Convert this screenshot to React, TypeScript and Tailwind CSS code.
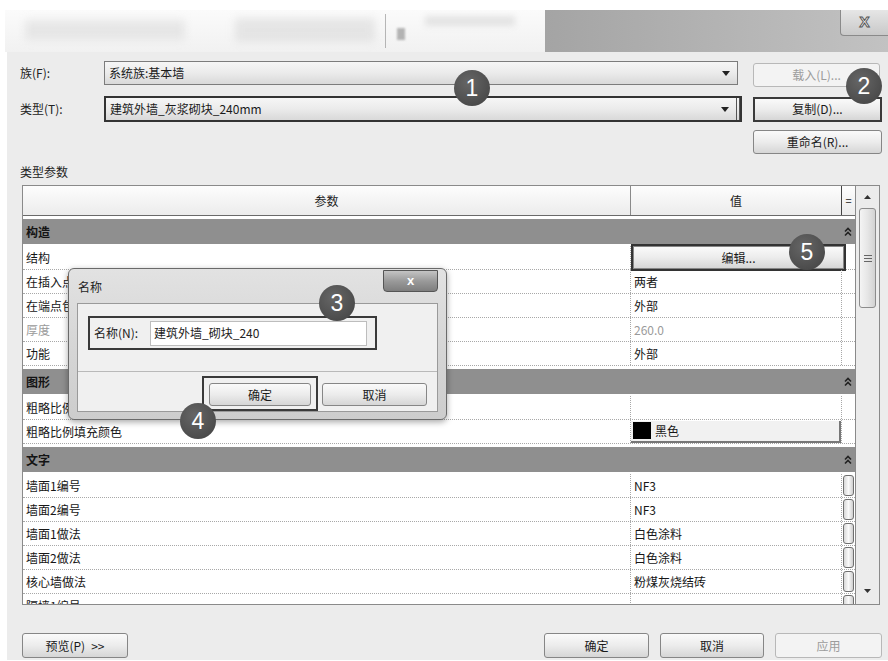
import React from 'react';

type Row = {
  name: string;
  value?: string;
  kind?: 'edit' | 'swatch' | 'dim';
  more?: boolean;
};

type Group = { title: string; rows: Row[] };

const groups: Group[] = [
  {
    title: '构造',
    rows: [
      { name: '结构', kind: 'edit' },
      { name: '在插入点包络', value: '两者' },
      { name: '在端点包络', value: '外部' },
      { name: '厚度', value: '260.0', kind: 'dim' },
      { name: '功能', value: '外部' },
    ],
  },
  {
    title: '图形',
    rows: [
      { name: '粗略比例填充样式' },
      { name: '粗略比例填充颜色', value: '黑色', kind: 'swatch' },
    ],
  },
  {
    title: '文字',
    rows: [
      { name: '墙面1编号', value: 'NF3', more: true },
      { name: '墙面2编号', value: 'NF3', more: true },
      { name: '墙面1做法', value: '白色涂料', more: true },
      { name: '墙面2做法', value: '白色涂料', more: true },
      { name: '核心墙做法', value: '粉煤灰烧结砖', more: true },
      { name: '隔墙1编号', value: '', more: true },
    ],
  },
];

const Button: React.FC<{ children: React.ReactNode; className?: string; disabled?: boolean }> = ({
  children,
  className = '',
  disabled,
}) => (
  <div
    className={`flex items-center justify-center rounded-[3px] border text-[12px] ${
      disabled
        ? 'border-[#b8b8b8] bg-[#f3f3f3] text-[#9c9c9c]'
        : 'border-[#868686] bg-gradient-to-b from-[#fafafa] via-[#ececec] to-[#d6d6d6] text-[#1a1a1a]'
    } ${className}`}
  >
    {children}
  </div>
);

const Caret = () => (
  <svg width="8" height="5" viewBox="0 0 8 5" className="shrink-0">
    <path d="M0 0h8L4 5z" fill="#222" />
  </svg>
);

const Collapse = () => (
  <svg width="8" height="10" viewBox="0 0 8 10">
    <path d="M1 4.5L4 1.5L7 4.5M1 8.5L4 5.5L7 8.5" fill="none" stroke="#222" strokeWidth="1.6" />
  </svg>
);

const Badge: React.FC<{ n: number; className: string }> = ({ n, className }) => (
  <div
    className={`absolute w-[36px] h-[36px] rounded-full bg-[radial-gradient(circle_at_40%_35%,#666,#414141)] text-white text-[23px] flex items-center justify-center font-['Liberation_Sans',sans-serif] ${className}`}
  >
    {n}
  </div>
);

const Select: React.FC<{ text: string; className?: string }> = ({ text, className = '' }) => (
  <div
    className={`flex items-center h-full pl-[4px] pr-[7px] bg-gradient-to-b from-[#f6f6f6] via-[#ebebeb] to-[#d9d9d9] text-[12px] text-[#1a1a1a] ${className}`}
  >
    <span className="flex-1">{text}</span>
    <Caret />
  </div>
);

function DataRow({ row }: { row: Row }) {
  const dim = row.kind === 'dim';
  return (
    <div className="flex h-[24px] shrink-0 border-b border-dotted border-[#a8a8a8] text-[12px]">
      <div
        className={`w-[608px] flex items-center px-[3px] border-r border-dotted border-[#a8a8a8] ${
          dim ? 'text-[#9a9a9a]' : 'text-[#161616]'
        }`}
      >
        {row.name}
      </div>
      {row.kind === 'edit' ? (
        <div className="w-[215px] border-2 border-[#333] -mt-[2px] h-[27px]">
          <Button className="h-full rounded-none">编辑...</Button>
        </div>
      ) : (
        <>
          <div
            className={`w-[211px] flex items-center border-r border-dotted border-[#a8a8a8] ${
              dim ? 'text-[#9a9a9a]' : 'text-[#161616]'
            }`}
          >
            {row.kind === 'swatch' ? (
              <div className="w-full h-[22px] flex items-center gap-[4px] pl-[2px] bg-[#f1f1f1] border-r-2 border-b-2 border-[#777]">
                <span className="w-[18px] h-[17px] bg-black" />
                <span>{row.value}</span>
              </div>
            ) : (
              <span className="px-[3px]">{row.value}</span>
            )}
          </div>
          <div className="w-[13px] flex items-center justify-center">
            {row.more && (
              <span className="w-[11px] h-[21px] rounded-[3px] border border-[#6f6f6f] bg-gradient-to-r from-[#d8d8d8] via-[#fafafa] to-[#cfcfcf]" />
            )}
          </div>
        </>
      )}
    </div>
  );
}

function GroupHeader({ title }: { title: string }) {
  return (
    <div className="mt-[3px] mb-[2px] flex h-[25px] shrink-0 items-center justify-between bg-[#8f8f8f] pl-[3px] pr-[3px] text-[12px] font-bold text-[#141414]">
      <span>{title}</span>
      <Collapse />
    </div>
  );
}

export default function App() {
  return (
    <div className="relative w-[888px] h-[661px] overflow-hidden bg-white font-['Noto_Sans_CJK_SC','Noto_Sans',sans-serif]">
      <div className="ml-[5px] mt-[10px] flex h-[650px] flex-col">
        {/* window caption */}
        <div className="flex h-[42px] shrink-0">
          <div className="relative w-[540px] overflow-hidden bg-gradient-to-b from-[#fbfbfb] to-[#f1f1f1]">
            <div className="absolute left-[20px] top-[10px] h-[20px] w-[160px] bg-[#dcdcdc] opacity-60 blur-[4px]" />
            <div className="absolute left-[230px] top-[8px] h-[24px] w-[140px] bg-[#d4d4d4] opacity-50 blur-[4px]" />
            <div className="absolute left-[380px] top-[4px] h-[34px] w-[1px] bg-[#9a9a9a] opacity-70" />
            <div className="absolute left-[392px] top-[18px] h-[12px] w-[8px] bg-[#888] opacity-60 blur-[1px]" />
            <div className="absolute left-[420px] top-[6px] h-[10px] w-[90px] bg-[#cfcfcf] opacity-50 blur-[3px]" />
          </div>
          <div className="flex flex-1 justify-end bg-gradient-to-r from-[#a4a4a4] via-[#b3b3b3] to-[#c2c2c2]">
            <div className="flex h-[26px] w-[48px] items-center justify-center rounded-bl-[4px] border-b border-l border-[#8a8a8a] bg-gradient-to-b from-[#e6e6e6] to-[#c9c9c9] text-[15px] font-bold text-white font-['Liberation_Sans',sans-serif] [-webkit-text-stroke:1px_#555]">
              X
            </div>
          </div>
        </div>

        {/* dialog body */}
        <div className="ml-[2px] flex flex-1 flex-col bg-[#ececec] pl-[13px] pr-[6px] pt-[8px]">
          <div className="flex h-[26px] items-center">
            <div className="w-[84px] text-[12px] text-[#222]">族(F):</div>
            <div className="h-[24px] w-[634px] border border-[#7c7c7c]">
              <Select text="系统族:基本墙" />
            </div>
            <Button disabled className="ml-[15px] mt-[3px] h-[24px] w-[127px]">
              载入(L)...
            </Button>
          </div>

          <div className="mt-[10px] flex h-[26px] items-center">
            <div className="w-[84px] text-[12px] text-[#222]">类型(T):</div>
            <div className="h-[26px] w-[638px] border-2 border-[#333]">
              <Select text="建筑外墙_灰浆砌块_240mm" className="border-r-4 border-double border-[#555]" />
            </div>
            <div className="ml-[11px] h-[25px] w-[129px] border-2 border-[#3a3a3a]">
              <Button className="h-full rounded-none border-0">复制(D)...</Button>
            </div>
          </div>

          <div className="mt-[8px] flex h-[24px] justify-end">
            <Button className="h-[24px] w-[129px]">重命名(R)...</Button>
          </div>

          <div className="mt-[7px] flex h-[22px] items-center text-[12px] text-[#222]">类型参数</div>

          {/* parameter grid */}
          <div className="ml-[2px] mt-[2px] flex h-[420px] w-[858px] overflow-hidden border border-[#8a8a8a] bg-white">
            <div className="flex w-[833px] flex-col border-r border-[#8a8a8a]">
              <div className="flex h-[30px] shrink-0 border-b border-[#6a6a6a] bg-gradient-to-b from-[#fdfdfd] to-[#ececec] text-[12px] text-[#222]">
                <div className="flex w-[608px] items-center justify-center border-r border-[#8a8a8a]">参数</div>
                <div className="flex w-[211px] items-center justify-center border-r border-[#444]">值</div>
                <div className="flex w-[13px] items-center justify-center text-[11px]">=</div>
              </div>
              {groups.map((g) => (
                <React.Fragment key={g.title}>
                  <GroupHeader title={g.title} />
                  {g.rows.map((r) => (
                    <DataRow key={r.name} row={r} />
                  ))}
                </React.Fragment>
              ))}
            </div>

            {/* scrollbar */}
            <div className="flex w-[23px] flex-col items-center bg-[#ececec]">
              <div className="flex h-[22px] items-center justify-center">
                <svg width="7" height="4" viewBox="0 0 7 4">
                  <path d="M0 4h7L3.5 0z" fill="#333" />
                </svg>
              </div>
              <div className="flex h-[100px] w-[17px] items-center justify-center rounded-[3px] border border-[#8c8c8c] bg-gradient-to-r from-[#f4f4f4] via-[#e6e6e6] to-[#d2d2d2]">
                <svg width="8" height="7" viewBox="0 0 8 7">
                  <path d="M0 0.5h8M0 3.5h8M0 6.5h8" stroke="#666" strokeWidth="1" />
                </svg>
              </div>
              <div className="flex-1" />
              <div className="flex h-[22px] items-center justify-center pb-[4px]">
                <svg width="7" height="4" viewBox="0 0 7 4">
                  <path d="M0 0h7L3.5 4z" fill="#333" />
                </svg>
              </div>
            </div>
          </div>

          <div className="mt-[28px] flex h-[25px]">
            <Button className="ml-[2px] h-[25px] w-[106px] gap-[6px]">
              <span>预览(P)</span>
              <span>&gt;&gt;</span>
            </Button>
            <Button className="ml-auto h-[25px] w-[105px]">确定</Button>
            <Button className="ml-[11px] h-[25px] w-[104px]">取消</Button>
            <Button disabled className="ml-[11px] h-[25px] w-[107px]">
              应用
            </Button>
          </div>
        </div>
      </div>

      {/* rename dialog */}
      <div className="absolute left-[68px] top-[268px] flex h-[152px] w-[379px] flex-col rounded-[6px] border border-[#6a6a6a] bg-gradient-to-b from-[#e2e2e2] via-[#d6d6d6] to-[#cdcdcd] shadow-[0_2px_6px_rgba(0,0,0,0.35)]">
        <div className="flex h-[34px] items-start justify-between pl-[9px]">
          <span className="mt-[9px] text-[12px] text-[#1e1e1e]">名称</span>
          <div className="mr-[8px] mt-[1px] flex h-[22px] w-[55px] items-center justify-center rounded-b-[4px] border border-[#555] bg-gradient-to-b from-[#c4c4c4] via-[#9a9a9a] to-[#7e7e7e] text-[13px] font-bold text-white font-['Liberation_Sans',sans-serif]">
            x
          </div>
        </div>
        <div className="mx-[8px] flex h-[109px] flex-col border border-[#9a9a9a] bg-[#f0f0f0]">
          <div className="ml-[10px] mt-[12px] flex h-[35px] w-[289px] items-center border-2 border-[#3a3a3a] pl-[4px] text-[12px] text-[#222]">
            <span className="w-[56px]">名称(N):</span>
            <div className="flex h-[25px] w-[217px] items-center border border-[#bdbdbd] bg-white px-[3px]">
              建筑外墙_砌块_240
            </div>
          </div>
          <div className="mt-[21px] border-t border-[#b9b9b9]" />
          <div className="flex">
            <div className="ml-[124px] mt-[4px] h-[35px] w-[116px] border-2 border-[#3a3a3a] p-[5px]">
              <Button className="h-[23px] w-full">确定</Button>
            </div>
            <Button className="ml-[4px] mt-[11px] h-[23px] w-[105px]">取消</Button>
          </div>
        </div>
      </div>

      <Badge n={1} className="left-[454px] top-[70px]" />
      <Badge n={2} className="left-[846px] top-[68px]" />
      <Badge n={3} className="left-[319px] top-[285px]" />
      <Badge n={4} className="left-[180px] top-[403px]" />
      <Badge n={5} className="left-[789px] top-[234px]" />
    </div>
  );
}
